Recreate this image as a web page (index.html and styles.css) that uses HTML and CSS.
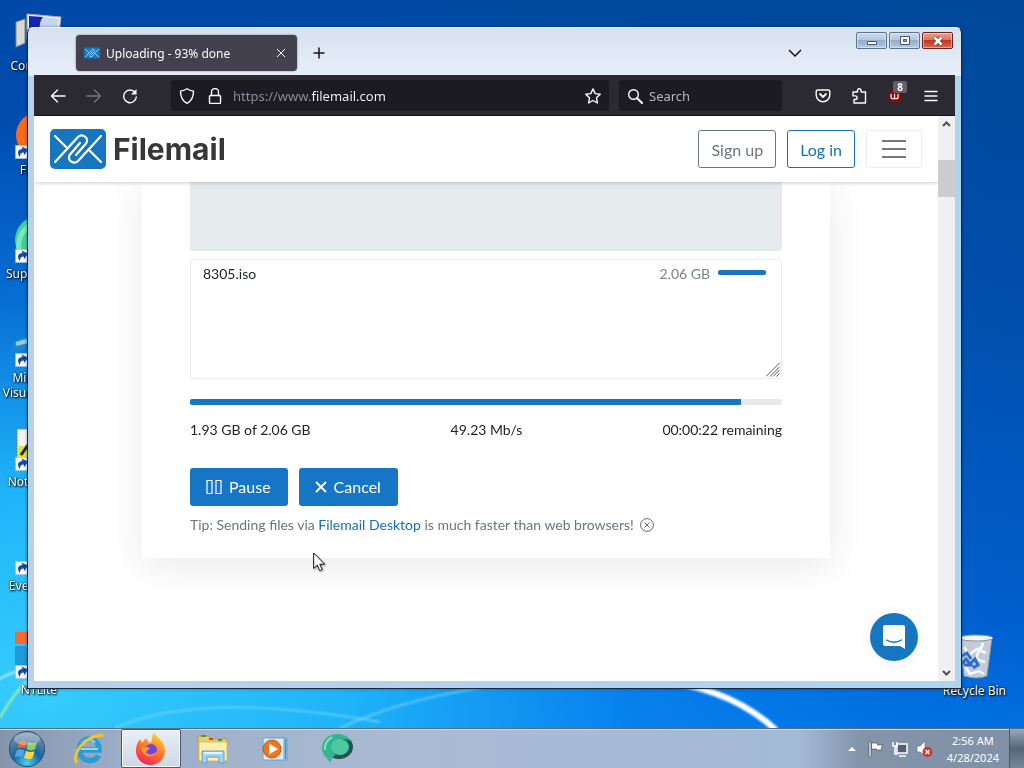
FILE: index.html
```html
<!DOCTYPE html>
<html lang="en">
<head>
<meta charset="utf-8">
<title>Uploading - 93% done</title>
<link rel="stylesheet" href="styles.css">
</head>
<body>
<svg class="defs" width="0" height="0" aria-hidden="true">
  <symbol id="shortcut" viewBox="0 0 14 14"><path fill="#f4f7fb" stroke="#8fa6c0" stroke-width=".6" d="M.3.3h13.4v13.4H.3z"/><path fill="#174a9c" d="M5 12C1.500 8 3 4 7.500 4L6.500 1.500 13 4.500 9.500 10 8.600 7.500C6.500 7.500 5 8.500 5 12z"/></symbol>
  <symbol id="clip-logo" viewBox="0 0 56 40"><rect width="56" height="40" rx="5" fill="#1676bf"/><g fill="none" stroke="#fff" stroke-width="2.200" stroke-linecap="round" stroke-linejoin="round"><path d="M5 7L16 18M5 33L28 8C32 4 40 9 36 14.500L26 26"/><path d="M51 33L40 22M51 7L28 32C24 36 16 31 20 25.500L30 14"/></g></symbol>
</svg>
<div class="desktop">
  <main class="workspace">
    <svg class="swoosh" viewBox="0 0 1024 728" preserveAspectRatio="none" aria-hidden="true">
      <defs><filter id="soft"><feGaussianBlur stdDeviation="1"/></filter></defs>
      <g fill="none" filter="url(#soft)">
        <path d="M0 718Q12 695 30 678" stroke="#a8f59c" stroke-width="2"/>
        <path d="M-5 682Q12 670 35 668" stroke="#b8ecff" stroke-width="2"/>
        <path d="M115 728Q200 690 380 722" stroke="#7ddcff" stroke-width="2" opacity=".7"/>
        <path d="M340 728Q400 700 480 688" stroke="#8fdcff" stroke-width="2" opacity=".6"/>
        <path d="M20 690Q60 660 180 670" stroke="#7ddcff" stroke-width="6" opacity=".4"/>
        <path d="M670 682Q735 692 776 730" stroke="#fff" stroke-width="6"/>
      </g>
    </svg>
    <ul class="shortcuts">
      <li><svg viewBox="0 0 48 48"><path fill="#d7d9d4" stroke="#888" d="M1 12l9-3v24l-9 4z"/><path fill="#e8edf3" stroke="#aab" d="M12 4l34 3-3 24-31-2z"/><path fill="#1424b8" d="M14 6l14 1q-6 8-1 20l-13-1z"/><path fill="#c3d6f2" d="M28 7l16 2-3 20-14-2q-5-12 1-20z"/></svg><span>Computer</span></li>
      <li><svg viewBox="0 0 48 48"><circle cx="24" cy="21" r="23" fill="#f76a1c"/><circle cx="24" cy="24" r="11" fill="#7542e5"/><use href="#shortcut" y="31" width="14" height="14"/></svg><span>Firefox</span></li>
      <li><svg viewBox="0 0 48 48"><circle cx="24" cy="22" r="24" fill="#3fcf9b"/><path d="M4 32Q1 12 24 2" fill="none" stroke="#79e8bf" stroke-width="5"/><use href="#shortcut" y="31" width="14" height="14"/></svg><span>Supermium</span></li>
      <li><svg viewBox="0 0 48 48"><path d="M2 28Q4 18 24 18" fill="none" stroke="#2584c6" stroke-width="10"/><path d="M1 22l11-3" stroke="#8ccbe6" stroke-width="4"/><use href="#shortcut" y="31" width="14" height="14"/></svg><span>Microsoft<br>Visual Studio</span></li>
      <li><svg viewBox="0 0 48 48"><path fill="#f4f4ee" stroke="#777" stroke-dasharray="2 1" d="M2 3h40v41H2z"/><path fill="#dce33a" d="M3 20h20v11H3z"/><path d="M6 29l7-10" stroke="#222" stroke-width="3"/><use href="#shortcut" y="31" width="14" height="14"/></svg><span>Notepad++</span></li>
      <li><svg viewBox="0 0 48 48"><circle cx="28" cy="22" r="13" fill="none" stroke="#f08020" stroke-width="6"/><use href="#shortcut" y="31" width="14" height="14"/></svg><span>Everything</span></li>
      <li><svg viewBox="0 0 48 48"><path fill="#f26a35" d="M0-2h22v12H0z"/><path fill="#1f9ad8" d="M0 12h22v20H0z"/><use href="#shortcut" y="31" width="14" height="14"/></svg><span>NTLite</span></li>
    </ul>
    <div class="recycle"><svg viewBox="0 0 48 48"><path fill="#c3ccd6" stroke="#8391a1" d="M9 2l33 1-5 38q-9 4-23 0z"/><ellipse cx="26" cy="3" rx="17" ry="3" fill="#eef2f6" stroke="#8794a2"/><path d="M15 4l6-2 7 2 7-1M14 12l5 8 8-6 9 4M30 12l-4 12 9 3M15 31l5 8 9-3 5 3M33 8l-3 9" fill="none" stroke="#f5f8fa" stroke-width="2.500"/><path d="M12 21l5-3 4 6M12 29l4-5 5 6h-7M20 29l5-5 3 6-5 3" stroke="#2a6fd0" stroke-width="3" fill="none"/></svg><span>Recycle Bin</span></div>

    <section class="window" aria-label="Browser window">
      <div class="titlebar">
        <div class="tab"><svg class="favicon" viewBox="0 0 56 40"><use href="#clip-logo"/></svg><span class="tab-title">Uploading - 93% done</span><button class="icon-btn tab-close" aria-label="Close tab"><svg viewBox="0 0 10 10"><path d="M1 1l8 8M9 1l-8 8"/></svg></button></div>
        <button class="icon-btn new-tab" aria-label="New tab"><svg viewBox="0 0 12 12"><path d="M6 .5v11M.5 6h11"/></svg></button>
        <button class="icon-btn tab-list" aria-label="List all tabs"><svg viewBox="0 0 14 8"><path d="M1 1l6 6 6-6"/></svg></button>
        <div class="controls">
          <button aria-label="Minimize"><svg viewBox="0 0 16 12"><path fill="#fff" stroke="#46566c" d="M3.500 6.500h9v3h-9z"/></svg></button>
          <button aria-label="Maximize"><svg viewBox="0 0 16 12"><path fill="#fff" stroke="#46566c" d="M3.500 1.500h9v8h-9z"/><path fill="#93a9c7" stroke="#46566c" d="M6.500 4.500h3v2h-3z"/></svg></button>
          <button class="close" aria-label="Close"><svg viewBox="0 0 16 12"><path stroke="#5c3432" stroke-width="4" d="M4.500 2.500l7 7M11.500 2.500l-7 7"/><path stroke="#fff" stroke-width="2.500" d="M4.500 2.500l7 7M11.500 2.500l-7 7"/></svg></button>
        </div>
      </div>
      <nav class="toolbar" aria-label="Navigation">
        <div class="tools">
          <button aria-label="Back"><svg viewBox="0 0 16 16"><path d="M15 8H1.500M7.500 2l-6 6 6 6"/></svg></button>
          <button disabled aria-label="Forward"><svg viewBox="0 0 16 16"><path d="M1 8h13.500M8.500 2l6 6-6 6"/></svg></button>
          <button aria-label="Reload"><svg viewBox="0 0 16 16"><path d="M13 4.500A6.300 6.300 0 1 0 14.300 9"/><path d="M14.500 1v5.500H9z" fill="currentColor" stroke="none"/></svg></button>
        </div>
        <div class="field url">
          <svg viewBox="0 0 16 16"><path d="M8 .8c2 1.400 4 2 6.500 2.300 0 6-1.500 10-6.500 12.200C3 13.100 1.500 9.100 1.500 3.100 4 2.800 6 2.200 8 .8z"/></svg>
          <svg viewBox="0 0 16 16"><rect x="2.500" y="7.500" width="11" height="8" rx="1"/><path d="M4.500 7.500V4a3.500 3.500 0 0 1 7 0v3.500"/></svg>
          <input type="text" aria-label="Address" value="https://www.filemail.com">
          <button aria-label="Bookmark this page"><svg viewBox="0 0 16 16"><path d="M8 .9l2.200 4.700 5 .7-3.700 3.500.9 5.200L8 12.500 3.600 15l.9-5.200L.8 6.300l5-.7z"/></svg></button>
        </div>
        <div class="field search"><svg viewBox="0 0 16 16"><circle cx="6.500" cy="6.500" r="4.800"/><path d="M10 10l5 5" stroke-width="2"/></svg><input type="text" aria-label="Search" placeholder="Search"></div>
        <div class="tools">
          <button aria-label="Save to Pocket"><svg viewBox="0 0 16 16"><path d="M2.500 2h11a1.300 1.300 0 0 1 1.300 1.300V7A6.800 6.800 0 0 1 1.200 7V3.300A1.300 1.300 0 0 1 2.500 2z"/><path d="M5 6l3 3 3-3" stroke-width="1.800"/></svg></button>
          <button aria-label="Extensions"><svg viewBox="0 0 16 16"><path d="M6.500 4V2.500a1.800 1.800 0 0 1 3.600 0V4H14.500v11H3V11.500h1.300a1.800 1.800 0 0 0 0-3.600H2V4z"/></svg></button>
          <button class="blocker" aria-label="Content blocker"><svg viewBox="0 0 16 16"><circle cx="8" cy="8" r="7.500" fill="#a00000" stroke="none"/><path d="M3.500 6v3.500q0 1.500 1.500 1.500h5q1.500 0 1.500-1.500V6M7.500 6v5" stroke="#fff"/></svg><b>8</b></button>
          <button aria-label="Menu"><svg viewBox="0 0 16 16"><path d="M2 3.500h12M2 8h12M2 12.500h12"/></svg></button>
        </div>
      </nav>
      <div class="view">
        <div class="page">
          <header class="site-header">
            <a class="brand" href="#"><svg viewBox="0 0 56 40"><use href="#clip-logo"/></svg>Filemail</a>
            <div class="account">
              <button class="outline">Sign up</button>
              <button class="outline primary">Log in</button>
              <button class="outline burger" aria-label="Open menu"><svg viewBox="0 0 24 20"><path d="M0 2h24M0 10h24M0 18h24"/></svg></button>
            </div>
          </header>
          <div class="page-body">
            <section class="card">
              <div class="drop-area"></div>
              <div class="file-box">
                <ul class="files"><li><span class="name">8305.iso</span><span class="size">2.06 GB</span><span class="file-bar"></span></li></ul>
                <svg class="grip" viewBox="0 0 14 14" aria-hidden="true"><path d="M0 13.500L13.500 0M4 13.500L13.500 4M7 13.500L13.500 7M10.500 13.500l3-3"/></svg>
              </div>
              <div class="progress" role="progressbar" aria-label="Upload progress" aria-valuenow="93"><div style="width:93%"></div></div>
              <div class="stats"><span>1.93 GB of 2.06 GB</span><span>49.23 Mb/s</span><span>00:00:22 remaining</span></div>
              <div class="actions">
                <button><svg viewBox="0 0 16 16"><path d="M1 1.500h5v13H1zM10 1.500h5v13h-5z"/></svg>Pause</button>
                <button class="cancel"><svg viewBox="0 0 12 12"><path d="M1 1l10 10M11 1L1 11" stroke-width="1.800"/></svg>Cancel</button>
              </div>
              <p class="tip">Tip: Sending files via <a href="#">Filemail Desktop</a> is much faster than web browsers!<button aria-label="Dismiss tip"><svg viewBox="0 0 14 14"><circle cx="7" cy="7" r="6.400"/><path d="M4.500 4.500l5 5M9.500 4.500l-5 5"/></svg></button></p>
            </section>
          </div>
          <button class="chat" aria-label="Open chat"><svg viewBox="0 0 24 26"><path fill="#fff" d="M3 1h18a2 2 0 0 1 2 2v22l-5-3H3a2 2 0 0 1-2-2V3a2 2 0 0 1 2-2z"/><path d="M4.500 16q7.500 4.500 15 0" fill="none" stroke="#1676bf" stroke-width="1.400" stroke-linecap="round"/></svg></button>
        </div>
        <div class="scrollbar" aria-hidden="true"><svg viewBox="0 0 9 6"><path d="M1 5l3.500-3.500L8 5"/></svg><div class="track"><div class="thumb"></div></div><svg viewBox="0 0 9 6"><path d="M1 1l3.500 3.500L8 1"/></svg></div>
      </div>
    </section>
    <svg class="cursor" viewBox="0 0 13 20" aria-hidden="true"><path fill="#fff" stroke="#111" d="M.7 1v15.500l3.600-3.400 2.400 5.600 2.500-1.100-2.400-5.400h4.900z"/></svg>
  </main>

  <footer class="taskbar">
    <button class="start" aria-label="Start"><svg viewBox="0 0 38 38"><defs><radialGradient id="orb" cx=".5" cy=".9" r=".9"><stop offset="0" stop-color="#43d5f6"/><stop offset=".45" stop-color="#17649f"/><stop offset="1" stop-color="#8499ad"/></radialGradient></defs><circle cx="19" cy="19" r="17.500" fill="url(#orb)" stroke="#28486a"/><path fill="#ee6030" d="M11 12q4-2.500 8-.5l-2 7q-4-2-8 .3z"/><path fill="#96cc4c" d="M20.500 12q4 2.300 8.500.5l-2 7q-4 2-8.500-.5z"/><path fill="#4aa8e8" d="M8.500 20.500q4-2.500 8-.3l-2 7q-4-2.200-8 .2z"/><path fill="#fbd347" d="M18 20.800q4 2.300 8.500.5l-2 7q-4 2-8.500-.5z"/><ellipse cx="19" cy="9" rx="13" ry="6.500" fill="#fff" opacity=".3"/></svg></button>
    <button class="task" aria-label="Internet Explorer"><svg viewBox="0 0 34 34"><path d="M8 18h19C27 9 21 7 17.500 7 11 7 7.500 12 7.500 18S12 28.500 18 28.500c4 0 7-2 8.500-5" fill="none" stroke="#2b9cd8" stroke-width="5.500"/><path d="M9 17h17M10 11q7-6 13-.5" fill="none" stroke="#82dcf8" stroke-width="2"/><path d="M5 31C-1 25 10 4 31 3" fill="none" stroke="#f3c32f" stroke-width="2.800"/></svg></button>
    <button class="task active" aria-label="Firefox"><svg viewBox="0 0 34 34"><defs><linearGradient id="fox" x1=".8" y1="0" x2=".3" y2="1"><stop offset="0" stop-color="#ffdf38"/><stop offset=".5" stop-color="#ff7a24"/><stop offset="1" stop-color="#ee2260"/></linearGradient></defs><path fill="url(#fox)" d="M20 1c2 4 11 7 11 18a14.500 14 0 0 1-29 0c0-6 2-9 4-12l2 4 4-5 3 5 3-2c0-3 0-6 2-8z"/><circle cx="17" cy="18" r="6" fill="#7542e5"/><path fill="#ff962e" d="M7 16c3-3 6-1 9 0l-4 4c3 4 8 3 11-1-1 7-14 8-16-3z"/></svg></button>
    <button class="task" aria-label="Windows Explorer"><svg viewBox="0 0 34 34"><path fill="#e9ce70" stroke="#bd9b40" d="M2 4h11l2 3h16v22H2z"/><path fill="#fff0ad" stroke="#d9bb62" d="M3 10h28v19H3z"/><path d="M5 4h5M22 8h4" stroke="#4b9748" stroke-width="2"/><path d="M13 7h4" stroke="#c9482e" stroke-width="2"/><path fill="#a5d4ef" stroke="#5d9ec7" d="M6 19h22v12h-5v-6H11v6H6z"/><path d="M8 21h18" stroke="#e4f6ff" stroke-width="2"/></svg></button>
    <button class="task" aria-label="Media Player"><svg viewBox="0 0 34 34"><path fill="#c7e3f5" stroke="#5c9ccc" d="M12 6h17v22H12z"/><path fill="#d9edfa" stroke="#6aa6d2" d="M5 6h21v22H5z"/><path d="M27.500 7v20" stroke="#448ac3" stroke-width="1.500"/><circle cx="14" cy="17" r="9" fill="#ef7620" stroke="#ca550e"/><path fill="#fff" d="M11 11.500l9 5.500-9 5.500z"/></svg></button>
    <button class="task" aria-label="Supermium"><svg viewBox="0 0 34 34"><ellipse cx="19" cy="15" rx="14" ry="12" fill="#25544f"/><path fill="#36b48f" d="M2 17C2 6 10 1 20 2c5 1 10 4 11 7-5-2-8-3-12-1-8 2-10 10-3 15-3 1-4 3-6 8-2-5-7-6-8-14z"/><ellipse cx="20" cy="15" rx="9" ry="8" fill="#4cc8a2"/><path d="M5 18q-1-8 7-13" fill="none" stroke="#7fe8c6" stroke-width="2"/></svg></button>
    <div class="tray">
      <svg viewBox="0 0 18 18"><path fill="#fff" d="M5 11h8L9 7z"/></svg>
      <svg viewBox="0 0 18 18"><path fill="#fff" stroke="#46525f" stroke-width=".7" d="M2 2h2v15H2zM4.500 3h6v2h5.500l-2 3 1 2H9.500V9h-5z"/></svg>
      <svg viewBox="0 0 18 18"><path fill="#526171" stroke="#fff" stroke-width="1.500" d="M6 4h10v9H6zM8 16h7"/><path d="M2 2v4h4V2M4 6v8h3" fill="none" stroke="#fff" stroke-width="1.500"/></svg>
      <svg viewBox="0 0 18 18"><path fill="#fff" stroke="#66727f" stroke-width=".7" d="M2 6h3l5-5v15l-5-4H2z"/><circle cx="12.500" cy="12" r="5" fill="#d92f2f"/><path d="M10.500 10l4 4M14.500 10l-4 4" stroke="#fff" stroke-width="1.500"/></svg>
      <time datetime="2024-04-28T02:56">2:56 AM<br>4/28/2024</time>
      <button class="show-desktop" aria-label="Show desktop"></button>
    </div>
  </footer>
</div>
</body>
</html>
```
FILE: styles.css
```css
* { box-sizing: border-box; }
body { margin: 0; font-family: "Noto Sans", "Open Sans", sans-serif; font-size: 12px; }
button { font: inherit; color: inherit; margin: 0; padding: 0; border: 0; background: none; }
ul { margin: 0; padding: 0; list-style: none; }
svg { display: block; flex: none; }
.defs { position: absolute; }

.desktop {
  display: flex; flex-direction: column; height: 100vh; overflow: hidden;
  background:
    radial-gradient(ellipse 85% 75% at 4% 90%, #36ccfb 0, #1fb4f9 35%, #0c8df080 68%, #0070e000 100%),
    linear-gradient(to right, #0048c050, #00408000 60%, #00306018),
    linear-gradient(#004a9f, #0052b4 40%, #0064d8 80%, #007cf4);
}
.workspace { position: relative; flex: 1; min-height: 0; }
.swoosh { position: absolute; inset: 0; width: 100%; height: 100%; }

/* Desktop icons */
.shortcuts { position: absolute; left: 0; top: 10px; width: 78px; display: grid; grid-auto-rows: 104px; }
.shortcuts li, .recycle { display: flex; flex-direction: column; align-items: center; color: #fff; line-height: 15px; text-align: center; white-space: nowrap; text-shadow: 1px 1px 2px #000, 0 0 2px #000; }
.shortcuts svg, .recycle svg { width: 48px; height: 48px; overflow: visible; }
.recycle { position: absolute; right: 18px; bottom: 30px; }

/* Browser window */
.window {
  position: absolute; inset: 27px 62px 39px 27px; display: flex; flex-direction: column;
  padding: 0 6px 7px; border: 1px solid #17293f; border-top-color: #e9f4fb; border-radius: 6px 6px 0 0;
  background: linear-gradient(#d6e2ef, #e8eef9 48px, transparent 48px), linear-gradient(to right, #b9cfee, #aed5f0);
  box-shadow: 0 0 3px #0006;
}
.titlebar { display: flex; align-items: center; height: 47px; padding-top: 3px; flex: none; color: #15141a; }
.tab { display: flex; align-items: center; width: 221px; height: 36px; margin-left: 42px; padding: 0 8px; border-radius: 4px; background: #42414d; color: #fbfbfe; box-shadow: 0 0 2px #0008; }
.favicon { width: 16px; height: 12px; margin-right: 6px; }
.tab-title { flex: 1; white-space: nowrap; }
.icon-btn { display: grid; place-items: center; width: 16px; height: 24px; }
.icon-btn svg { fill: none; stroke: currentColor; stroke-width: 1.5; }
.tab-close svg { width: 10px; height: 10px; stroke-width: 1; }
.new-tab { margin-left: 14px; }
.new-tab svg { width: 12px; height: 12px; }
.tab-list { margin-left: auto; }
.tab-list svg { width: 14px; height: 8px; }
.controls { display: flex; gap: 2px; align-self: flex-start; margin: 1px 2px 0 53px; }
.controls button { display: grid; place-items: center; width: 31px; height: 17px; border: 1px solid #5c728f; border-radius: 2px; background: linear-gradient(#ccd9ea, #b5c7df 45%, #93acca 50%, #b6cbe2); box-shadow: inset 0 0 0 1px #ffffff70; }
.controls .close { border-color: #6d2222; background: linear-gradient(#e7a08e, #d87562 45%, #c13724 50%, #d66a4c); }
.controls svg { width: 16px; height: 12px; }

.toolbar { display: flex; align-items: center; gap: 23px; height: 41px; flex: none; padding: 1px 6px 0; background: #2b2a33; border-bottom: 1px solid #15141a; color: #fbfbfe; }
.toolbar svg { width: 16px; height: 16px; fill: none; stroke: currentColor; stroke-width: 1.4; stroke-linejoin: round; stroke-linecap: round; }
.tools { display: flex; }
.tools button { display: grid; place-items: center; width: 36px; height: 32px; position: relative; }
.tools button:disabled { color: #76757e; }
.field { display: flex; align-items: center; gap: 12px; height: 31px; padding: 0 8px; border-radius: 4px; background: #1c1b22; }
.field input { flex: 1; min-width: 0; padding: 0; border: 0; outline: 0; font: inherit; font-size: 13px; background: none; color: #fbfbfe; }
.url { flex: 1; margin-right: -13px; }
.url input { height: 24px; -webkit-text-fill-color: transparent; background: linear-gradient(to right, #8f8f9d 78px, #fbfbfe 78px); -webkit-background-clip: text; background-clip: text; }
.url svg:nth-child(2) { margin-right: -2px; }
.search { width: 163px; gap: 6px; }
.search input::placeholder { color: #b5b5bf; opacity: 1; }
.tools .blocker svg { width: 14px; height: 14px; }
.tools b { position: absolute; right: 6px; top: 1px; padding: 0 4px; border-radius: 2px; background: #5f5f68; font-size: 10px; line-height: 12px; }

/* Web page */
.view { flex: 1; min-height: 0; display: flex; background: #fff; }
.page { position: relative; flex: 1; display: flex; flex-direction: column; min-width: 0; font-family: Lato, sans-serif; color: #212529; overflow: hidden; }
.site-header { position: relative; z-index: 1; display: flex; align-items: center; justify-content: space-between; height: 66px; flex: none; padding: 0 16px; background: #fff; box-shadow: 0 1px 4px #0003; }
.brand { display: flex; align-items: center; gap: 7px; color: #373737; font-family: Inter, sans-serif; font-size: 30px; font-weight: 700; line-height: 40px; text-decoration: none; }
.brand svg { width: 56px; height: 40px; }
.account { display: flex; gap: 11px; font-size: 16px; }
.outline { height: 38px; padding: 0 12px; border: 1px solid #6c757d; border-radius: 3px; color: #6c757d; }
.outline.primary { border-color: #1670b8; color: #1670b8; }
.outline.burger { padding: 0 15px; border-color: #eee; }
.burger svg { width: 24px; height: 20px; stroke: #777; stroke-width: 2; }
.page-body { flex: 1; min-height: 0; }
.card { margin: 0 108px; padding: 0 48px 23px; background: #fff; box-shadow: 0 8px 36px #00000016; font-size: 14px; line-height: 20px; }
.drop-area { height: 69px; border-radius: 0 0 3px 3px; background: #e5eaec; }
.file-box { position: relative; margin-top: 8px; }
.files { height: 120px; padding: 4px 12px; border: 1px solid #ececec; border-radius: 3px; }
.grip { position: absolute; right: 2px; bottom: 2px; width: 14px; height: 14px; stroke: #555; stroke-width: 1; }
.files li { display: flex; align-items: center; }
.name { flex: 1; }
.size { color: #7b8288; }
.file-bar { width: 48px; height: 5px; margin: 0 3px 3px 8px; border-radius: 2px; background: #1676bf; }
.progress { height: 6px; margin-top: 20px; border-radius: 2px; background: #e9e9e9; overflow: hidden; }
.progress div { height: 100%; background: #1676bf; }
.stats { display: flex; justify-content: space-between; margin-top: 15px; }
.actions { display: flex; gap: 11px; margin-top: 28px; font-size: 16px; }
.actions button { display: flex; align-items: center; gap: 7px; height: 38px; padding: 0 17px 0 16px; border-radius: 3px; background: #1676c5; color: #fff; }
.actions svg { width: 16px; height: 16px; fill: none; stroke: currentColor; stroke-width: 1.2; }
.actions .cancel svg { width: 12px; height: 12px; }
.tip { display: flex; align-items: center; margin: 9px 0 0; color: #6c757d; white-space: pre; }
.tip a { color: #1670b8; text-decoration: none; }
.tip button { margin-left: 6px; }
.tip svg { width: 14px; height: 14px; fill: none; stroke: #666; }
.chat { position: absolute; right: 20px; bottom: 20px; display: grid; place-items: center; width: 48px; height: 48px; border-radius: 50%; background: #1676bf; box-shadow: 0 1px 16px #0001; }
.chat svg { width: 24px; height: 26px; }
.scrollbar { display: flex; flex-direction: column; align-items: center; width: 17px; padding: 5px 0; background: #f0f0f0; }
.scrollbar svg { width: 9px; height: 6px; fill: none; stroke: #505050; stroke-width: 2; }
.track { flex: 1; align-self: stretch; padding-top: 33px; }
.thumb { height: 37px; background: #cdcdcd; }
.cursor { position: absolute; left: 313px; top: 552px; width: 13px; height: 20px; filter: drop-shadow(1px 1px 1px #0005); }

/* Taskbar */
.taskbar { position: relative; display: flex; align-items: center; gap: 2px; height: 40px; flex: none; border-top: 1px solid #536c88; background: linear-gradient(to right, #8494ab, #9caec7 12%, #aabbd4 40%, #a3bad8 78%, #8494a9 84%, #8090a6); box-shadow: inset 0 1px #c8d9e9; }
.start { width: 57px; padding-left: 8px; }
.start svg { width: 38px; height: 38px; }
.task { display: grid; place-items: center; width: 60px; height: 39px; }
.task svg { width: 34px; height: 34px; }
.task.active { border: 1px solid #455a73; border-radius: 2px; background: linear-gradient(#e9eef5, #cdd8e7); box-shadow: inset 0 0 0 1px #f7faff; }
.tray { display: flex; align-items: center; gap: 6px; margin-left: auto; height: 100%; color: #fff; }
.tray svg { width: 18px; height: 18px; }
.tray time { margin: 0 4px 0 8px; font-size: 11px; line-height: 17px; text-align: center; }
.show-desktop { width: 15px; height: 100%; border-left: 1px solid #4a5868; background: linear-gradient(#9aa8b9, #56667a 50%, #78889c); }
```
